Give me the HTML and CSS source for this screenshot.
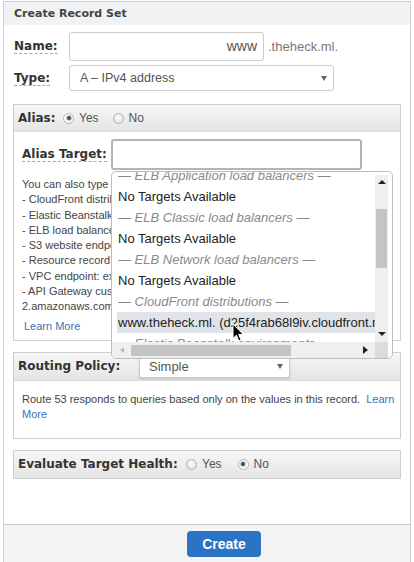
FILE: index.html
```html
<!DOCTYPE html>
<html>
<head>
<meta charset="utf-8">
<title>Create Record Set</title>
<link rel="stylesheet" href="styles.css">
</head>
<body>
<div class="panel">
  <div class="panel-title">Create Record Set</div>
  <div class="panel-body">
    <div class="row row-name">
      <span class="cell cell-name"><span class="lbl dotted">Name:</span></span>
      <div class="textbox name-box">www</div>
      <span class="suffix">.theheck.ml.</span>
    </div>
    <div class="row row-type">
      <span class="cell cell-name"><span class="lbl dotted">Type:</span></span>
      <div class="selectbox type-select"><span>A – IPv4 address</span><span class="caret"></span></div>
    </div>

    <section class="box alias-box">
      <div class="box-head">
        <span class="cell cell-alias"><span class="lbl">Alias:</span></span>
        <span class="radio checked"></span><span class="rlabel">Yes</span>
        <span class="radio gap"></span><span class="rlabel">No</span>
      </div>
      <div class="box-body">
        <div class="row target-row">
          <span class="cell cell-target"><span class="lbl dotted">Alias Target:</span></span>
          <div class="target-wrap">
            <div class="textbox target-box"></div>
            <div class="dropdown">
              <div class="dd-list">
                <div class="dd-items">
                  <div class="opt grp">— ELB Application load balancers —</div>
                  <div class="opt">No Targets Available</div>
                  <div class="opt grp">— ELB Classic load balancers —</div>
                  <div class="opt">No Targets Available</div>
                  <div class="opt grp">— ELB Network load balancers —</div>
                  <div class="opt">No Targets Available</div>
                  <div class="opt grp">— CloudFront distributions —</div>
                  <div class="opt sel">www.theheck.ml. (d25f4rab68l9iv.cloudfront.net)</div>
                  <div class="opt grp">— Elastic Beanstalk environments —</div>
                </div>
              </div>
              <div class="vscroll"><span class="arr-up"></span><span class="vthumb"></span><span class="arr-down"></span></div>
              <div class="hscroll"><span class="arr-left"></span><span class="hthumb"></span><span class="arr-right"></span></div>
              <div class="corner"></div>
              <svg class="cursor" width="12" height="19" viewBox="0 0 12 19"><path d="M1 1 L1 15.5 L4.4 12.2 L6.8 17.8 L9 16.9 L6.7 11.4 L11.2 11.4 Z" fill="#000" stroke="#fff" stroke-width="1" stroke-linejoin="round"/></svg>
            </div>
          </div>
        </div>
        <div class="help">
          <div>You can also type the domain name for the resource. Examples:</div>
          <div>- CloudFront distribution domain name: d111111abcdef8.cloudfront.net</div>
          <div>- Elastic Beanstalk environment CNAME: example.elasticbeanstalk.com</div>
          <div>- ELB load balancer DNS name: example-1.us-east-2.elb.amazonaws.com</div>
          <div>- S3 website endpoint: s3-website.us-east-2.amazonaws.com</div>
          <div>- Resource record set in this hosted zone: www.example.com</div>
          <div>- VPC endpoint: example.us-east-2.vpce.amazonaws.com</div>
          <div>- API Gateway custom regional API: d-abcde12345.execute-api.us-west-</div>
          <div>2.amazonaws.com</div>
          <a class="link learn" href="#">Learn More</a>
        </div>
      </div>
    </section>

    <section class="box routing-box">
      <div class="box-head head-tall">
        <span class="cell cell-routing"><span class="lbl">Routing Policy:</span></span>
        <div class="selectbox simple-select"><span>Simple</span><span class="caret"></span></div>
      </div>
      <div class="box-body routing-body">
        <p>Route 53 responds to queries based only on the values in this record. <a class="link" href="#">Learn More</a></p>
      </div>
    </section>

    <section class="box eval-box">
      <div class="box-head">
        <span class="cell cell-eval"><span class="lbl">Evaluate Target Health:</span></span>
        <span class="radio"></span><span class="rlabel">Yes</span>
        <span class="radio checked gap2"></span><span class="rlabel">No</span>
      </div>
    </section>
  </div>
  <div class="panel-foot">
    <button class="btn-create" type="button">Create</button>
  </div>
</div>
</body>
</html>
```

FILE: styles.css
```css
* { box-sizing: border-box; margin: 0; padding: 0; }

html, body { background: #fff; overflow: hidden; }

body {
  font-family: "Liberation Sans", Arial, sans-serif;
  color: #444;
  padding: 1px 0 0 3px;
  height: 562px;
}

.panel {
  width: 408px;
  height: 561px;
  border: 1px solid #cfcfcf;
  border-bottom: none;
  display: flex;
  flex-direction: column;
}

.panel-title {
  height: 23px;
  padding-left: 10px;
  background: #f1f2f3;
  font: bold 11px "DejaVu Sans", Verdana, sans-serif;
  line-height: 24px;
  color: #444;
}

.panel-body {
  flex: 1;
  padding: 7px 9px 0 9px;
}

.row {
  display: flex;
  align-items: center;
}

.cell {
  flex: none;
  display: flex;
  align-items: center;
}

.cell-name { width: 55px; }
.cell-alias { width: 45px; }
.cell-target { width: 89px; }
.cell-routing { width: 121px; }
.cell-eval { width: 168px; }

.lbl {
  font: bold 12px "DejaVu Sans", Verdana, sans-serif;
  color: #333;
  white-space: nowrap;
}

.dotted {
  display: inline-block;
  line-height: 14px;
  border-bottom: 1px dashed #a8a8a8;
}

.row-name { padding-left: 1px; }
.row-type { padding-left: 1px; margin-top: 4px; }

.textbox {
  background: #fff;
  border: 1px solid #ccc;
  border-radius: 3px;
}

.name-box {
  width: 195px;
  height: 29px;
  line-height: 27px;
  text-align: right;
  padding-right: 6px;
  font-size: 14px;
  color: #555;
}

.suffix {
  margin-left: 4px;
  font-size: 13px;
  color: #777;
}

.selectbox {
  display: flex;
  align-items: center;
  justify-content: space-between;
  background: #fff;
  border: 1px solid #ccc;
  border-radius: 3px;
  color: #555;
}

.caret {
  width: 0;
  height: 0;
  border-left: 3px solid transparent;
  border-right: 3px solid transparent;
  border-top: 5px solid #666;
}

.type-select {
  width: 265px;
  height: 26px;
  padding: 0 6px 0 10px;
  font-size: 12.5px;
}

/* boxes */
.box {
  border: 1px solid #cfcfcf;
  background: #fff;
}

.box-head {
  display: flex;
  align-items: center;
  height: 27px;
  padding-left: 4px;
  background: linear-gradient(#f7f7f7, #e4e4e4);
  border-bottom: 1px solid #dadada;
}

.head-tall { height: 28px; }

.box-body { padding: 0 5px 0 8px; }

.alias-box { margin-top: 13px; }
.alias-box .box-body { padding-bottom: 6px; }

.radio {
  position: relative;
  width: 11px;
  height: 11px;
  flex: none;
  border: 1px solid #b3b3b3;
  border-radius: 50%;
  background: radial-gradient(circle at 50% 40%, #fdfdfd, #dcdcdc);
}

.radio.checked { background: #fbfbfb; }

.radio.checked::after {
  content: "";
  position: absolute;
  left: 2.5px;
  top: 2.5px;
  width: 4px;
  height: 4px;
  border-radius: 50%;
  background: #4a4a4a;
  box-shadow: 0 0 0 1px #cfcfcf;
}

.radio.gap { margin-left: 14px; }
.radio.gap2 { margin-left: 16px; }

.rlabel {
  margin-left: 5px;
  font-size: 12px;
  color: #555;
}

/* alias target */
.target-row { margin-top: 7px; }

.target-wrap { position: relative; }

.target-box {
  width: 251px;
  height: 31px;
  border: 2px solid #b4b4b4;
  border-radius: 3px;
}

.dropdown {
  position: absolute;
  z-index: 5;
  left: 0;
  top: 32px;
  width: 282px;
  height: 188px;
  background: #fff;
  border: 1px solid #bdbdbd;
  border-radius: 5px;
  overflow: hidden;
  display: grid;
  grid-template-columns: 263px 13px 4px;
  grid-template-rows: 170px 16px;
}

.dd-list {
  grid-column: 1;
  grid-row: 1;
  overflow: hidden;
  padding-left: 5px;
}

.dd-items { margin-top: -7px; }

.opt {
  height: 21px;
  line-height: 21px;
  padding-left: 1px;
  font-size: 13px;
  color: #222;
  white-space: nowrap;
}

.opt.grp {
  font-style: italic;
  color: #8a8a8a;
}

.opt.sel { background: #e0e3e8; }

.vscroll {
  grid-column: 2;
  grid-row: 1;
  margin-top: 3px;
  background: #efefef;
  display: flex;
  flex-direction: column;
  align-items: center;
}

.arr-up {
  margin-top: 5px;
  width: 0;
  height: 0;
  border-left: 4px solid transparent;
  border-right: 4px solid transparent;
  border-bottom: 4px solid #222;
}

.vthumb {
  margin-top: 25px;
  width: 11px;
  height: 59px;
  background: #c4c4c4;
}

.arr-down {
  margin-top: auto;
  margin-bottom: 6px;
  width: 0;
  height: 0;
  border-left: 4px solid transparent;
  border-right: 4px solid transparent;
  border-top: 4px solid #222;
}

.hscroll {
  grid-column: 1;
  grid-row: 2;
  background: #efefef;
  display: flex;
  align-items: center;
}

.arr-left {
  margin-left: 8px;
  width: 0;
  height: 0;
  border-top: 3.5px solid transparent;
  border-bottom: 3.5px solid transparent;
  border-right: 4px solid #bbb;
}

.hthumb {
  margin-left: 7px;
  width: 160px;
  height: 11px;
  background: #c4c4c4;
}

.arr-right {
  margin-left: auto;
  margin-right: 7px;
  width: 0;
  height: 0;
  border-top: 4px solid transparent;
  border-bottom: 4px solid transparent;
  border-left: 5px solid #222;
}

.corner {
  grid-column: 2;
  grid-row: 2;
  background: #dcdcdc;
}

.cursor {
  position: absolute;
  left: 120px;
  top: 151px;
}

/* help text */
.help {
  margin-top: 7px;
  font-size: 11px;
  line-height: 15.3px;
  color: #444;
  white-space: nowrap;
  overflow: hidden;
}

.link {
  color: #3b72b8;
  text-decoration: none;
}

.learn {
  display: block;
  margin-top: 4px;
  margin-left: 2px;
}

/* routing */
.routing-box { margin-top: 11px; }

.simple-select {
  width: 151px;
  height: 24px;
  padding: 0 6px 0 9px;
  font-size: 13px;
  border-radius: 2px;
  box-shadow: 0 1px 2px rgba(0, 0, 0, 0.18);
}

.routing-body {
  padding: 11px 0 16px 8px;
  font-size: 11px;
  line-height: 15px;
  color: #444;
}

.routing-body .link { margin-left: 3px; }

/* evaluate */
.eval-box { margin-top: 11px; }
.eval-box .box-head { border-bottom: none; }

/* footer */
.panel-foot {
  height: 38px;
  border-top: 1px solid #c9c9c9;
  background: #f3f3f3;
  padding: 6px 0 0 183px;
}

.btn-create {
  width: 74px;
  height: 26px;
  border: none;
  border-radius: 4px;
  background: #2a73c5;
  color: #fff;
  font: bold 14px "Liberation Sans", Arial, sans-serif;
}
```
